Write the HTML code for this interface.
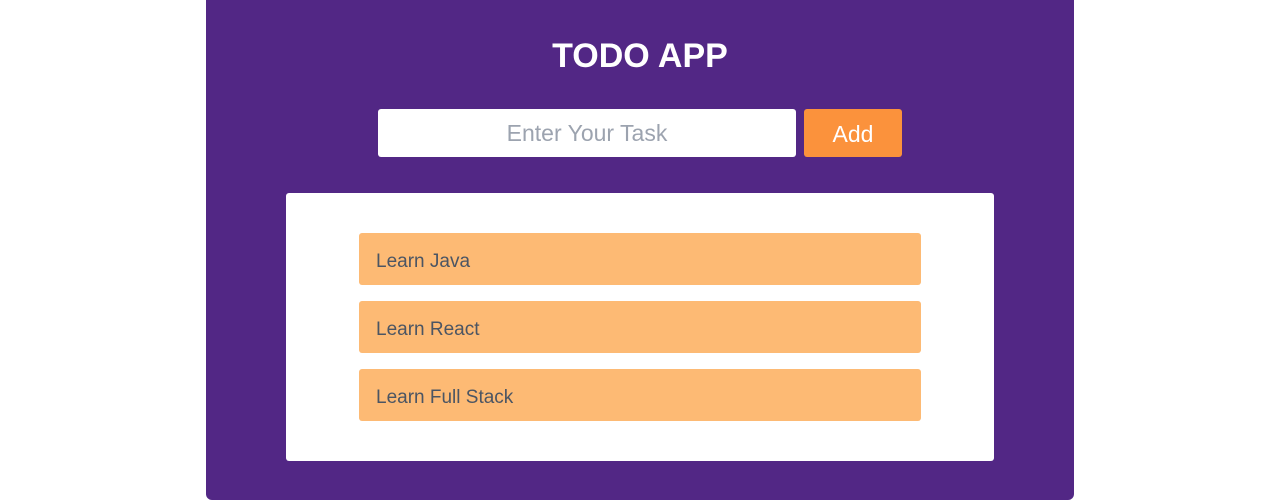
<!DOCTYPE html>
<html><head><style>
body{margin:0;background:#fff;font-family:"Liberation Sans",sans-serif;width:1280px;height:501px;overflow:hidden;position:relative}
.main{position:absolute;left:206px;top:0;width:868px;height:500px;background:#522785;border-radius:0 0 6px 6px}
h1{position:absolute;left:0;right:0;top:35px;margin:0;text-align:center;color:#fff;font-size:34px;font-weight:bold;line-height:42px}
.inp{position:absolute;left:172px;top:109px;width:418px;height:48px;background:#fff;border-radius:3px;color:#9ca3af;font-size:23px;text-align:center;line-height:48px}
.btn{position:absolute;left:598px;top:109px;width:98px;height:48px;background:#fb923c;border-radius:3px;color:#fff;font-size:23px;text-align:center;line-height:50px}
.box{position:absolute;left:80px;top:193px;width:708px;height:268px;background:#fff;border-radius:3px}
.it{position:absolute;left:73px;width:545px;height:52px;padding-left:17px;background:#fdba74;border-radius:3px;color:#4b5563;font-size:19px;line-height:57px}
</style></head><body>
<div class="main">
<h1>TODO APP</h1>
<div class="inp">Enter Your Task</div>
<div class="btn">Add</div>
<div class="box">
<div class="it" style="top:40px">Learn Java</div>
<div class="it" style="top:108px">Learn React</div>
<div class="it" style="top:176px">Learn Full Stack</div>
</div>
</div>
</body></html>
